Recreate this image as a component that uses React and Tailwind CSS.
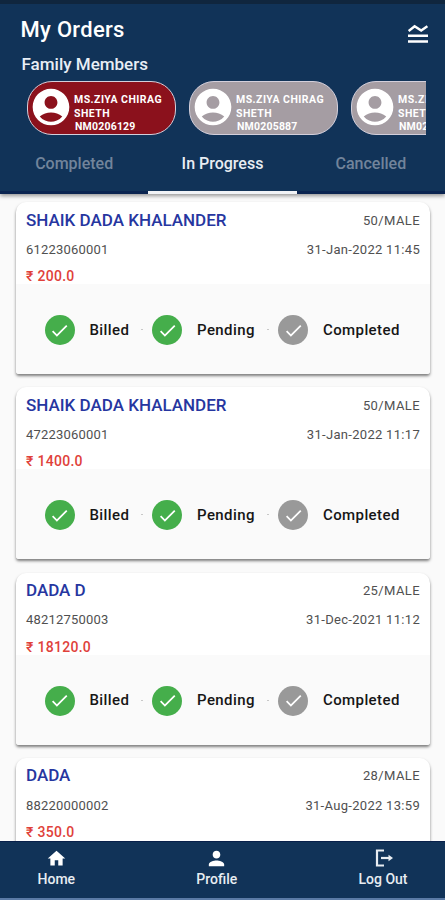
import { MdAccountCircle, MdCheck, MdHome, MdPerson } from 'react-icons/md'

const members = [
  { id: 'NM0206129', active: true },
  { id: 'NM0205887', active: false },
  { id: 'NM0205890', active: false }
]

const tabs = ['Completed', 'In Progress', 'Cancelled']

const orders = [
  { name: 'SHAIK DADA KHALANDER', info: '50/MALE', number: '61223060001', date: '31-Jan-2022 11:45', price: '200.0', tracked: true },
  { name: 'SHAIK DADA KHALANDER', info: '50/MALE', number: '47223060001', date: '31-Jan-2022 11:17', price: '1400.0', tracked: true },
  { name: 'DADA D', info: '25/MALE', number: '48212750003', date: '31-Dec-2021 11:12', price: '18120.0', tracked: true },
  { name: 'DADA', info: '28/MALE', number: '88220000002', date: '31-Aug-2022 13:59', price: '350.0', tracked: false }
]

function MenuIcon() {
  return (
    <svg className="w-5 h-5" viewBox="0 0 20 20" fill="none" stroke="white" strokeWidth="2.5">
      <path d="M0.6 7 L6.6 2.2 L13.2 6.6 L19.4 2.2" />
      <path d="M0 11.8 H20 M0 17.6 H20" />
    </svg>
  )
}

function LogOutIcon() {
  return (
    <svg className="w-[18px] h-[18px]" viewBox="0 0 18 18" fill="none" stroke="#e8edf2" strokeWidth="2.2">
      <path d="M9 1.5 H2 V16.5 H9" />
      <path d="M6 9 H15" />
      <path d="M13.5 5.7 L18 9 L13.5 12.3 Z" fill="#e8edf2" stroke="none" />
    </svg>
  )
}

function MemberChip({ member }) {
  return (
    <div
      className={`flex shrink-0 w-[149px] h-[54px] rounded-[25px] border-[1.5px] border-[#d3cfdb] text-white ${
        member.active ? 'bg-[#8b111c]' : 'bg-[#a59da3]'
      }`}
    >
      <MdAccountCircle className="shrink-0 w-[44px] h-[44px] ml-[1px] mt-[3px]" />
      <div className="ml-[1px] mt-[11px] text-[10.5px] leading-[13.5px] font-bold tracking-[0.45px] whitespace-nowrap">
        <p>MS.ZIYA CHIRAG</p>
        <p>SHETH</p>
        <p className="pl-[1px] tracking-[0.2px]">{member.id}</p>
      </div>
    </div>
  )
}

function Step({ label, done, className }) {
  return (
    <div className={`flex items-center ${className}`}>
      <div className={`w-[30px] h-[30px] rounded-full flex items-center justify-center ${done ? 'bg-[#45ae4b]' : 'bg-[#999999]'}`}>
        <MdCheck className="w-[21px] h-[21px] text-white" />
      </div>
      <span className="ml-[15px] text-[15px] font-medium text-[#161616] tracking-[0.4px]">{label}</span>
    </div>
  )
}

function OrderCard({ order }) {
  return (
    <div className="shrink-0 h-[172px] mb-[13.3px] rounded-t-[10px] rounded-b-[3px] overflow-hidden bg-white shadow-[0_2px_3px_rgba(0,0,0,0.5)]">
      <div className="h-[82px] px-[10px] pt-px">
        <div className="flex justify-between items-center h-[34.5px]">
          <span className="text-[17px] font-medium text-[#2636a0]">{order.name}</span>
          <span className="text-[13px] text-[#505050] tracking-[0.4px]">{order.info}</span>
        </div>
        <div className="flex justify-between items-center h-[24px] text-[13px] text-[#505050]">
          <span className="tracking-[0.2px]">{order.number}</span>
          <span className="tracking-[0.3px]">{order.date}</span>
        </div>
        <p className="mt-[4.5px] text-[14px] leading-[20px] font-medium text-[#e0413a] tracking-[0.3px]">₹ {order.price}</p>
      </div>
      {order.tracked && (
        <div className="relative h-[90px] flex items-center pt-[2px] bg-[#fafafa]">
          <Step label="Billed" done className="ml-[28.5px] w-[107.5px]" />
          <Step label="Pending" done className="w-[126px]" />
          <Step label="Completed" />
          <span className="absolute left-[125px] top-[45px] w-[2px] h-px bg-[#c8c8c8]" />
          <span className="absolute left-[251px] top-[45px] w-[2px] h-px bg-[#c8c8c8]" />
        </div>
      )}
    </div>
  )
}

export default function App() {
  return (
    <div className="flex flex-col w-[445px] h-[900px] overflow-hidden bg-[#fafafa] font-[Roboto,sans-serif]">
      <header className="relative z-10 shrink-0 h-[194px] bg-[#113358] border-t-4 border-[#10263e] shadow-[0_2px_4px_rgba(0,0,0,0.4)]">
        <div className="flex justify-between h-[45px] pl-[20.5px] pr-[17px]">
          <h1 className="mt-[11px] text-[22px] leading-[30px] font-medium text-white tracking-[0.3px]">My Orders</h1>
          <div className="mt-5">
            <MenuIcon />
          </div>
        </div>
        <h2 className="ml-[21.5px] mt-[4px] text-[17px] leading-[22px] font-medium text-[#e8eef5]">Family Members</h2>
        <div className="flex gap-[13px] ml-[27px] mr-[19px] mt-[6px] overflow-hidden">
          {members.map(member => (
            <MemberChip key={member.id} member={member} />
          ))}
        </div>
        <nav className="flex h-[59px]">
          {tabs.map(tab => (
            <div
              key={tab}
              className={`flex-1 pt-[18px] text-center text-[16px] leading-[22px] font-medium border-b-[3px] ${
                tab === 'In Progress' ? 'text-[#e8edf2] border-[#f0f2f5]' : 'text-[#71849b] border-[#0a2450]'
              }`}
            >
              {tab}
            </div>
          ))}
        </nav>
      </header>

      <main className="flex flex-col flex-1 min-h-0 overflow-hidden pl-[16px] pr-[15px] pt-[8px]">
        {orders.map(order => (
          <OrderCard key={order.number} order={order} />
        ))}
      </main>

      <footer className="shrink-0 h-[59px] flex justify-between bg-[#113358] border-t border-t-[#08204a] border-b-2 border-b-[#5b7ba6] px-[37.5px] text-[14px] leading-[18px] font-medium text-[#e8edf2]">
        <div className="flex flex-col items-center">
          <MdHome className="w-[21px] h-[21px] mt-[6px] text-white" />
          <span className="mt-[1px]">Home</span>
        </div>
        <div className="flex flex-col items-center">
          <MdPerson className="w-[23px] h-[23px] mt-[5px] text-white" />
          <span>Profile</span>
        </div>
        <div className="flex flex-col items-center">
          <div className="h-[21px] mt-[7px] pl-[2px]">
            <LogOutIcon />
          </div>
          <span>Log Out</span>
        </div>
      </footer>
    </div>
  )
}
